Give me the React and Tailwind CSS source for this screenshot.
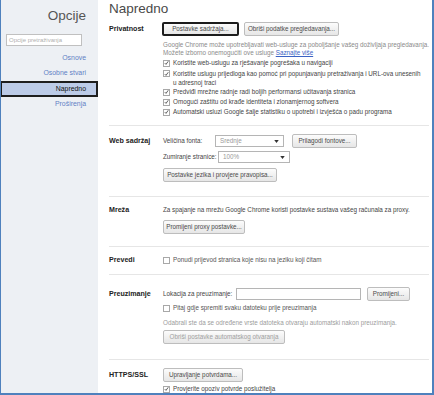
import React from "react";

const Check = ({ checked = true }) => (
  <span className="inline-flex items-center justify-center w-[7px] h-[7px] border border-[#a8a8a8] bg-white shrink-0 mr-[3px]">
    {checked && (
      <svg viewBox="0 0 8 8" className="w-[6px] h-[6px]">
        <path d="M1.2 4.2 L3.2 6.2 L6.8 1.2" stroke="#3a3a3a" strokeWidth="1.3" fill="none" />
      </svg>
    )}
  </span>
);

const Btn = ({ w, children, focus = false, disabled = false }) => (
  <div
    className={
      "h-[14px] shrink-0 flex items-center justify-center rounded-[2px] bg-gradient-to-b from-[#fcfcfc] to-[#e6e6e6] whitespace-nowrap text-[6.3px] " +
      w +
      (focus ? " border-2 border-[#1c1c1c]" : " border border-[#bdbdbd]") +
      (disabled ? " text-[#a0a0a0]" : " text-[#4a4a4a]")
    }
  >
    {children}
  </div>
);

const Select = ({ w, value }) => (
  <div className={"h-[12px] shrink-0 flex items-center justify-between border border-[#b5b5b5] bg-white pl-[4px] pr-[4px] " + w}>
    <span className="text-[#9a9a9a] text-[6.3px]">{value}</span>
    <svg viewBox="0 0 6 4" className="w-[5px] h-[3px]">
      <path d="M0 0 L6 0 L3 4 Z" fill="#333" />
    </svg>
  </div>
);

const Label = ({ pt, lh, children }) => (
  <div className={"w-[54px] shrink-0 font-bold text-[7.1px] text-[#222] whitespace-nowrap " + pt + " " + lh}>{children}</div>
);

const CheckRow = ({ children, checked = true, color = "text-[#444]" }) => (
  <div className={"flex items-start " + color}>
    <div className="h-[10px] flex items-center">
      <Check checked={checked} />
    </div>
    <div className="leading-[10px] whitespace-nowrap">{children}</div>
  </div>
);

export default function App() {
  return (
    <div className="w-[434px] h-[395px] overflow-hidden flex border-l border-r-2 border-b-2 border-[#4f81bd] bg-white font-['Liberation_Sans',Arial,sans-serif] text-[6.3px]">
      {/* Sidebar */}
      <div className="w-[97px] shrink-0 bg-[#edf0f4] flex flex-col">
        <div className="pt-[7px] pr-[12px] text-right text-[13.5px] leading-[18px] text-[#555]">Opcije</div>
        <div className="mt-[9px] ml-[5px] w-[76px] h-[12px] border border-[#c0c0c0] bg-white flex items-center pl-[2px]">
          <span className="text-[6px] text-[#b0b0b0] whitespace-nowrap">Opcije pretraživanja</span>
        </div>
        <div className="mt-[5px] flex flex-col text-[6.9px]">
          <div className="h-[15px] flex items-center justify-end pr-[12px] text-[#5f80c4]">Osnove</div>
          <div className="h-[15px] flex items-center justify-end pr-[12px] text-[#5f80c4]">Osobne stvari</div>
          <div className="h-[16px] -ml-[1px] flex items-center justify-end pr-[10px] bg-[#bccbe7] border-2 border-[#1e1e1e] text-[#111]">Napredno</div>
          <div className="h-[15px] flex items-center justify-end pr-[12px] text-[#5f80c4]">Proširenja</div>
        </div>
      </div>

      {/* Main */}
      <div className="flex-1 flex flex-col pl-[11px] pr-[7px]">
        <div className="h-[18px] text-[13.5px] leading-[18px] text-[#4a4a4a]">Napredno</div>

        {/* Privatnost */}
        <div className="flex border-b border-[#e6e6e6] pb-[8px]">
          <Label pt="pt-[4px]" lh="leading-[14px]">Privatnost</Label>
          <div className="flex flex-col pt-[4px]">
            <div className="flex gap-[5px] -ml-[1px]">
              <Btn w="w-[77px]" focus>Postavke sadržaja...</Btn>
              <Btn w="w-[95px]">Obriši podatke pregledavanja...</Btn>
            </div>
            <div className="mt-[5px] leading-[8px] text-[#8a8a8a] whitespace-nowrap">
              Google Chrome može upotrebljavati web-usluge za poboljšanje vašeg doživljaja pregledavanja.
              <br />
              Možete izborno onemogućiti ove usluge <span className="text-[#3a62c4] underline">Saznajte više</span>
            </div>
            <div className="mt-[1px] flex flex-col">
              <CheckRow>Koristite web-uslugu za rješavanje pogrešaka u navigaciji</CheckRow>
              <div className="flex items-start text-[#444] h-[19px]">
                <div className="h-[11px] flex items-center">
                  <Check />
                </div>
                <div className="leading-[9px] pt-[1px] whitespace-nowrap">
                  Koristite uslugu prijedloga kao pomoć pri popunjavanju pretraživanja i URL-ova unesenih
                  <br />u adresnoj traci
                </div>
              </div>
              <CheckRow>Predviđi mrežne radnje radi boljih performansi učitavanja stranica</CheckRow>
              <CheckRow>Omogući zaštitu od krađe identiteta i zlonamjernog softvera</CheckRow>
              <CheckRow>Automatski usluzi Google šalje statistiku o upotrebi i izvješća o padu programa</CheckRow>
            </div>
          </div>
        </div>

        {/* Web sadržaj */}
        <div className="flex border-b border-[#e6e6e6] pb-[14px]">
          <Label pt="pt-[8px]" lh="leading-[14px]">Web sadržaj</Label>
          <div className="flex flex-col pt-[8px] text-[#444]">
            <div className="h-[14px] flex items-center">
              <span className="w-[52px] whitespace-nowrap">Veličina fonta:</span>
              <Select w="w-[69px]" value="Srednje" />
              <div className="ml-[8px]">
                <Btn w="w-[65px]">Prilagodi fontove...</Btn>
              </div>
            </div>
            <div className="mt-[2px] h-[14px] flex items-center">
              <span className="w-[55px] whitespace-nowrap">Zumiranje stranice:</span>
              <Select w="w-[72px]" value="100%" />
            </div>
            <div className="mt-[4px]">
              <Btn w="w-[114px]">Postavke jezika i provjere pravopisa...</Btn>
            </div>
          </div>
        </div>

        {/* Mreža */}
        <div className="flex border-b border-[#e6e6e6] pb-[12px]">
          <Label pt="pt-[9px]" lh="leading-[8px]">Mreža</Label>
          <div className="flex flex-col pt-[9px] text-[#444]">
            <div className="leading-[8px] whitespace-nowrap">
              Za spajanje na mrežu Google Chrome koristi postavke sustava vašeg računala za proxy.
            </div>
            <div className="mt-[6px]">
              <Btn w="w-[82px]">Promijeni proxy postavke...</Btn>
            </div>
          </div>
        </div>

        {/* Prevedi */}
        <div className="flex border-b border-[#e6e6e6] pb-[9px]">
          <Label pt="pt-[8px]" lh="leading-[10px]">Prevedi</Label>
          <div className="flex flex-col pt-[8px]">
            <CheckRow checked={false} color="text-[#555]">
              Ponudi prijevod stranica koje nisu na jeziku koji čitam
            </CheckRow>
          </div>
        </div>

        {/* Preuzimanje */}
        <div className="flex border-b border-[#e6e6e6] pb-[15px]">
          <Label pt="pt-[12px]" lh="leading-[14px]">Preuzimanje</Label>
          <div className="flex flex-col pt-[12px] text-[#444]">
            <div className="h-[14px] flex items-center">
              <span className="w-[73px] whitespace-nowrap">Lokacija za preuzimanje:</span>
              <div className="w-[125px] h-[12px] border border-[#b5b5b5] bg-white" />
              <div className="ml-[6px]">
                <Btn w="w-[43px]">Promijeni...</Btn>
              </div>
            </div>
            <div className="mt-[2px]">
              <CheckRow checked={false} color="text-[#555]">
                Pitaj gdje spremiti svaku datoteku prije preuzimanja
              </CheckRow>
            </div>
            <div className="mt-[6px] leading-[8px] text-[#9c9c9c] whitespace-nowrap">
              Odabrali ste da se određene vrste datoteka otvaraju automatski nakon preuzimanja.
            </div>
            <div className="mt-[3px]">
              <Btn w="w-[122px]" disabled>Obriši postavke automatskog otvaranja</Btn>
            </div>
          </div>
        </div>

        {/* HTTPS/SSL */}
        <div className="flex">
          <Label pt="pt-[8px]" lh="leading-[14px]">HTTPS/SSL</Label>
          <div className="flex flex-col pt-[8px]">
            <Btn w="w-[80px]">Upravljanje potvrdama...</Btn>
            <div className="mt-[2px]">
              <CheckRow>Provjerite opoziv potvrde poslužitelja</CheckRow>
            </div>
          </div>
        </div>
      </div>
    </div>
  );
}
